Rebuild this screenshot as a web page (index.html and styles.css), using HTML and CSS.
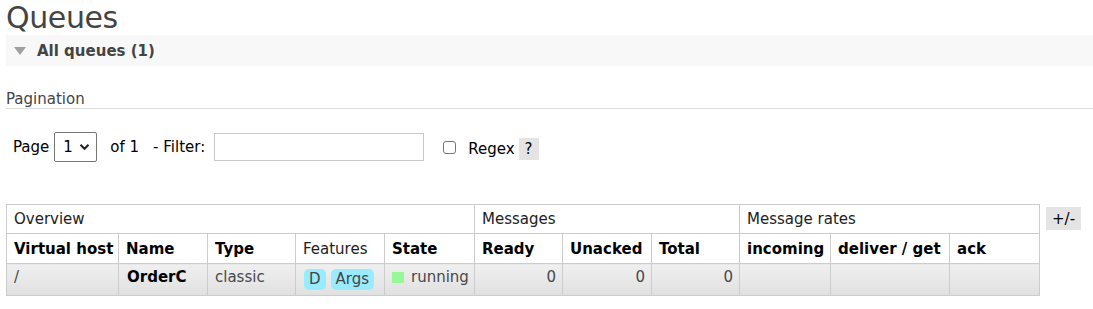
FILE: index.html
```html
<!DOCTYPE html>
<html>
<head>
<meta charset="utf-8">
<link rel="stylesheet" href="styles.css">
</head>
<body>
<h1 class="title">Queues</h1>
<div class="section">
  <h2 class="section-head"><span class="tri"></span>All queues (1)</h2>
  <h3 class="sub">Pagination</h3>
  <div class="pager">
    <span class="lbl">Page</span>
    <span class="select">1<svg class="chev" width="11" height="8" viewBox="0 0 11 8"><path d="M1.5 1.8 L5.5 5.8 L9.5 1.8" fill="none" stroke="#222" stroke-width="2"/></svg></span>
    <span class="of">of 1</span>
    <span class="filter">- Filter:</span>
    <span class="input"></span>
    <span class="check"></span>
    <span class="regex">Regex</span>
    <span class="help">?</span>
  </div>
  <div class="listwrap">
    <table class="list">
      <colgroup>
        <col style="width:112px"><col style="width:89px"><col style="width:88px"><col style="width:89px"><col style="width:90px">
        <col style="width:88px"><col style="width:89px"><col style="width:88px">
        <col style="width:91px"><col style="width:119px"><col style="width:90px">
      </colgroup>
      <tr class="group">
        <th colspan="5">Overview</th>
        <th colspan="3">Messages</th>
        <th colspan="3">Message rates</th>
      </tr>
      <tr class="cols">
        <th>Virtual host</th>
        <th>Name</th>
        <th>Type</th>
        <th class="plain">Features</th>
        <th>State</th>
        <th>Ready</th>
        <th>Unacked</th>
        <th>Total</th>
        <th>incoming</th>
        <th>deliver / get</th>
        <th>ack</th>
      </tr>
      <tr class="row">
        <td>/</td>
        <td class="name">OrderC</td>
        <td>classic</td>
        <td><span class="badge">D</span><span class="badge">Args</span></td>
        <td><span class="state"><span class="dot"></span>running</span></td>
        <td class="num">0</td>
        <td class="num">0</td>
        <td class="num">0</td>
        <td></td>
        <td></td>
        <td></td>
      </tr>
    </table>
    <span class="toggle">+/-</span>
  </div>
</div>
</body>
</html>
```
FILE: styles.css
```css
html, body {
  margin: 0;
  padding: 0;
  background: #fff;
}
body {
  padding-left: 6px;
  font-family: "DejaVu Sans", Verdana, sans-serif;
  font-size: 15px;
  color: #000;
  overflow: hidden;
}
.title {
  margin: 0;
  font-size: 30px;
  font-weight: normal;
  line-height: 35px;
  color: #444;
  letter-spacing: -0.4px;
}
.section-head {
  margin: 0;
  height: 31px;
  display: flex;
  align-items: center;
  background: #f8f8f8;
  font-size: 15px;
  font-weight: bold;
  color: #444;
}
.tri {
  width: 0;
  height: 0;
  margin-left: 8px;
  margin-right: 11px;
  border-left: 6.5px solid transparent;
  border-right: 6.5px solid transparent;
  border-top: 8px solid #a0a0a0;
}
.sub {
  margin: 24px 0 0 0;
  font-size: 15px;
  font-weight: normal;
  line-height: 18px;
  color: #444;
  padding-left: 0;
  border-bottom: 1px solid #ddd;
}
.pager {
  margin-top: 23px;
  height: 30px;
  display: flex;
  align-items: center;
  padding-left: 7px;
  font-size: 15px;
  color: #000;
}
.select {
  margin-left: 5px;
  width: 43px;
  height: 30px;
  box-sizing: border-box;
  border: 1px solid #767676;
  border-radius: 2px;
  display: flex;
  align-items: center;
  padding-left: 8px;
  font-size: 15px;
}
.chev {
  margin-left: 6px;
}
.of {
  margin-left: 13px;
}
.filter {
  margin-left: 14px;
}
.input {
  margin-left: 9px;
  width: 210px;
  height: 28px;
  box-sizing: border-box;
  border: 1px solid #c8c8c8;
}
.check {
  margin-left: 19px;
  width: 13px;
  height: 13px;
  box-sizing: border-box;
  border: 1px solid #767676;
  border-radius: 3px;
  background: #fff;
}
.regex {
  margin-left: 12px;
  margin-top: 4px;
}
.help {
  margin-left: 4px;
  margin-top: 4px;
  width: 20px;
  height: 22px;
  background: #e4e4e4;
  display: flex;
  align-items: center;
  justify-content: center;
}
.listwrap {
  margin-top: 42px;
  display: flex;
  align-items: flex-start;
}
.list {
  border-collapse: collapse;
  table-layout: fixed;
  width: 1034px;
}
.list th, .list td {
  border: 1px solid #ccc;
  padding: 0 6px 0 7px;
  text-align: left;
  white-space: nowrap;
}
.group th {
  height: 28px;
  font-weight: normal;
  color: #222;
}
.cols th {
  height: 29px;
  font-weight: bold;
  color: #000;
}
.cols th.plain {
  font-weight: normal;
  color: #222;
}
.row td {
  height: 27px;
  vertical-align: top;
  padding-top: 4px;
  line-height: 18px;
  background: linear-gradient(#f0f0f0, #e0e0e0);
  color: #484848;
}
.row td.name {
  font-weight: bold;
  color: #000;
  padding-left: 8px;
}
.row td.num {
  text-align: right;
}
.badge {
  display: inline-block;
  background: #99ebff;
  border-radius: 5px;
  padding: 2px 5px;
  line-height: 17px;
  vertical-align: -2px;
  margin-right: 5px;
  color: #444;
}
.badge:first-child {
  margin-left: 1px;
}
.state {
  display: inline-flex;
  align-items: center;
}
.dot {
  width: 12px;
  height: 11px;
  background: #98f898;
  margin-left: 0;
  margin-right: 7px;
}
.toggle {
  margin-left: 6px;
  margin-top: 3px;
  width: 35px;
  height: 23px;
  background: #e4e4e4;
  display: flex;
  align-items: center;
  justify-content: center;
  font-size: 15px;
}
```
